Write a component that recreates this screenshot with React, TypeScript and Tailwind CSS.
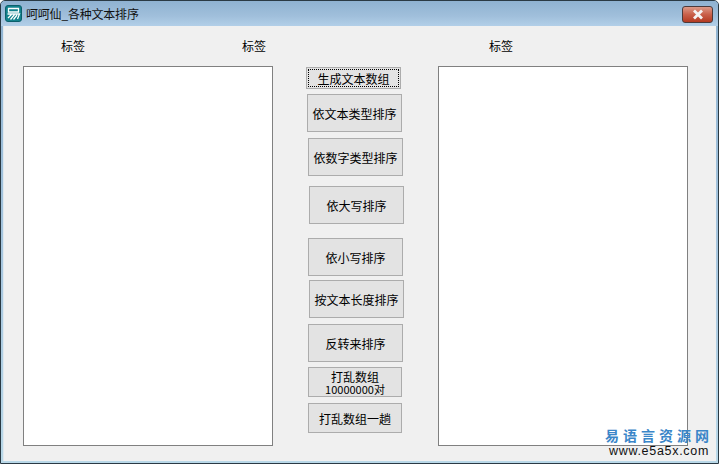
import React from 'react';

interface ActionButton {
  lines: string[];
  className: string;
}

// x/y of these are uneven in the original form, so each one carries its own margins
const buttons: ActionButton[] = [
  { lines: ['依文本类型排序'], className: 'mt-[5px] ml-[1px] w-[95px] h-[38px]' },
  { lines: ['依数字类型排序'], className: 'mt-[6px] ml-[2px] w-[95px] h-[38px]' },
  { lines: ['依大写排序'], className: 'mt-[10px] ml-[3px] w-[95px] h-[38px]' },
  { lines: ['依小写排序'], className: 'mt-[14px] ml-[2px] w-[95px] h-[38px]' },
  { lines: ['按文本长度排序'], className: 'mt-[4px] ml-[3px] w-[95px] h-[38px]' },
  { lines: ['反转来排序'], className: 'mt-[6px] ml-[2px] w-[95px] h-[38px]' },
  { lines: ['打乱数组', '10000000对'], className: 'mt-[5px] ml-[2px] w-[94px] h-[30px]' },
  { lines: ['打乱数组一趟'], className: 'mt-[6px] ml-[2px] w-[94px] h-[30px]' },
];

const FormButton: React.FC<ActionButton> = ({ lines, className }) => (
  <button className={`flex flex-col items-center justify-center border border-[#acacac] bg-[#e3e3e3] pt-[1px] text-black ${className}`}>
    <span className="text-[12px] leading-[12px]">{lines[0]}</span>
    {lines[1] && <span className="text-[11px] leading-[12px]">{lines[1]}</span>}
  </button>
);

const AppIcon = () => (
  <svg width="17" height="17" viewBox="0 0 17 17" className="shrink-0">
    <rect x="0.5" y="0.5" width="16" height="16" rx="2.5" fill="#12828c" stroke="#0b5f6b" />
    <path d="M3.5 3.5H13.5V7H3.5Z" stroke="#ffffff" strokeWidth="1.3" fill="none" />
    <path d="M2.5 9H14.5L12.5 14M6.5 9.5L3 13M9.5 9.5L5.5 14.5M12 10L8.5 14.5" stroke="#ffffff" strokeWidth="1.3" fill="none" />
  </svg>
);

export default function App() {
  return (
    <div className="relative flex h-[464px] w-[719px] flex-col overflow-hidden rounded-t-[5px] border border-[#2a3a44] bg-[linear-gradient(to_bottom,#8fb3d1,#a9c8e0_60%,#b9d8e8)] font-['Noto_Sans_CJK_SC','Liberation_Sans',sans-serif]">
      {/* title bar */}
      <div className="flex h-[25px] shrink-0 items-center bg-[linear-gradient(to_bottom,#8fb2d1,#a0bfdb_60%,#b2cfe8)] pl-[4px] pr-[5px]">
        <AppIcon />
        <span className="ml-[4px] pt-[1px] text-[12px] leading-none tracking-[-0.2px] text-[#111]">呵呵仙_各种文本排序</span>
        <button className="ml-auto mt-[2px] flex h-[17px] w-[31px] items-center justify-center rounded-[3px] border border-[#4d3a3a] bg-[linear-gradient(to_bottom,#dc9a88,#c9604a_50%,#b33a22)]">
          <svg width="14" height="11" viewBox="0 0 14 11">
            <path d="M3 1.5L11 9.5M11 1.5L3 9.5" stroke="#f4f4f4" strokeWidth="2.8" />
          </svg>
        </button>
      </div>

      {/* client area */}
      <div className="mx-[2px] mb-[2px] flex-1 border-l border-[#dfe8ee] bg-[#f0f0f0] pl-[19px]">
        <div className="flex h-[40px] items-center pb-[1px] text-[12px] text-black">
          <span className="ml-[38px]">标签</span>
          <span className="ml-[157px]">标签</span>
          <span className="ml-[223px]">标签</span>
        </div>
        <div className="flex">
          <textarea readOnly className="h-[380px] w-[250px] resize-none border border-[#808080] bg-white" />
          <div className="ml-[33px] flex w-[100px] flex-col pt-[1px]">
            <button className="flex h-[22px] w-[95px] items-center justify-center border border-[#acacac] bg-[#e3e3e3] p-[1px]">
              <span className="flex h-full w-full items-center justify-center border border-dotted border-black pt-[1px] text-[12px] leading-none text-black">生成文本数组</span>
            </button>
            {buttons.map(button => (
              <FormButton key={button.lines[0]} {...button} />
            ))}
          </div>
          <textarea readOnly className="ml-[32px] h-[380px] w-[250px] resize-none border border-[#808080] bg-white" />
        </div>
      </div>

      {/* site watermark stamped over the window */}
      <div className="absolute right-[6px] bottom-[5px] flex w-[106px] flex-col items-center whitespace-nowrap">
        <span className="pb-[1px] text-[14px] leading-[18px] font-bold tracking-[4px] text-[#3a86c8]">易语言资源网</span>
        <span className="font-['Liberation_Sans',sans-serif] text-[12.5px] leading-[13px] tracking-[0.7px] text-[#111]">www.e5a5x.com</span>
      </div>
    </div>
  );
}
